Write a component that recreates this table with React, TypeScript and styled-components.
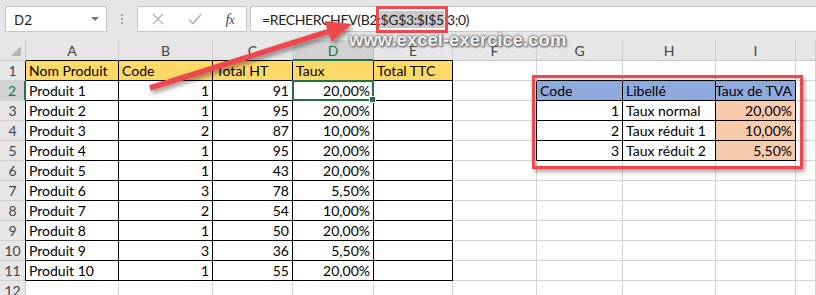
import React from 'react';
import styled, { createGlobalStyle } from 'styled-components';

const Global = createGlobalStyle`
  html, body { margin: 0; padding: 0; background: #fff; }
  body { width: 816px; height: 295px; overflow: hidden; font-family: Lato, "Noto Sans", sans-serif; }
`;

const RED = '#EE4750';
const GREEN = '#217346';
const GRID = '#D4D4D4';
const HEAD_BG = '#E6E6E6';

const Page = styled.div`
  position: relative;
  width: 816px;
  height: 295px;
  overflow: hidden;
  background: #fff;
`;

/* ---------- formula bar ---------- */
const Toolbar = styled.div`
  height: 40px;
  box-sizing: border-box;
  background: ${HEAD_BG};
  display: flex;
  align-items: flex-start;
  padding: 6px 0 0 5px;
`;

const Box = styled.div`
  height: 26px;
  box-sizing: border-box;
  background: #fff;
  border: 1px solid #C6C6C6;
  display: flex;
  align-items: center;
`;

const NameBox = styled(Box)`
  width: 102px;
  padding: 0 7px 0 8px;
  justify-content: space-between;
  font-family: "Noto Sans", sans-serif;
  font-size: 14px;
  color: #222;
`;

const Caret = styled.span`
  width: 0;
  height: 0;
  border-left: 4px solid transparent;
  border-right: 4px solid transparent;
  border-top: 4px solid #777;
  margin-top: -1px;
`;

const Dots = styled.div`
  width: 30px;
  height: 26px;
  display: flex;
  flex-direction: column;
  align-items: center;
  justify-content: center;
  gap: 2px;
  & > i { display: block; width: 2px; height: 2px; background: #A0A0A0; }
`;

const FuncBox = styled(Box)`
  width: 110px;
  padding: 0 12px 0 14px;
  justify-content: space-between;
`;

const Fx = styled.span`
  font-family: "Liberation Serif", serif;
  font-style: italic;
  font-size: 15px;
  color: #444;
  letter-spacing: -0.5px;
  & > small { font-size: 12px; }
`;

const FormulaBox = styled(Box)`
  flex: 1;
  margin-left: 3px;
  margin-right: -6px;
  padding-left: 11px;
  font-family: Lato, sans-serif;
  font-size: 14px;
  color: #222;
  letter-spacing: -0.35px;
  white-space: pre;
`;

const RefMark = styled.span`
  position: relative;
  background: #C9C9C9;
  &::after {
    content: "";
    position: absolute;
    left: -4px;
    right: -4px;
    top: -5px;
    bottom: -5px;
    border: 3px solid ${RED};
  }
`;

/* ---------- sheet ---------- */
const COLS = [93, 94, 80, 81, 79, 84, 86, 93, 80, 20];
const LETTERS = ['A', 'B', 'C', 'D', 'E', 'F', 'G', 'H', 'I', ''];

const Sheet = styled.div`
  display: grid;
  grid-template-columns: 26px ${COLS.map((c) => `${c}px`).join(' ')};
  grid-template-rows: 21px repeat(12, 20px);
`;

const Corner = styled.div`
  position: relative;
  background: ${HEAD_BG};
  border-right: 1px solid #C9C9C9;
  border-bottom: 1px solid #C9C9C9;
  box-sizing: border-box;
  &::after {
    content: "";
    position: absolute;
    right: 4px;
    bottom: 4px;
    width: 0;
    height: 0;
    border-left: 10px solid transparent;
    border-bottom: 10px solid #B5B5B5;
  }
`;

const ColHead = styled.div<{ $sel?: boolean; $bottom: string }>`
  box-sizing: border-box;
  background: ${(p) => (p.$sel ? '#D2D2D2' : HEAD_BG)};
  border-right: 1px solid ${(p) => (p.$sel ? '#BDBDBD' : '#D0D0D0')};
  border-bottom: ${(p) => (p.$sel ? `2px solid ${GREEN}` : `1px solid ${p.$bottom}`)};
  display: flex;
  align-items: center;
  justify-content: center;
  font-size: 14px;
  color: ${(p) => (p.$sel ? GREEN : '#444')};
  padding-top: 1px;
`;

const RowHead = styled.div<{ $sel?: boolean; $right: string }>`
  box-sizing: border-box;
  background: ${(p) => (p.$sel ? '#D2D2D2' : HEAD_BG)};
  border-right: ${(p) => (p.$sel ? `2px solid ${GREEN}` : `1px solid ${p.$right}`)};
  border-bottom: 1px solid #D0D0D0;
  display: flex;
  align-items: flex-end;
  justify-content: center;
  padding-bottom: 1px;
  font-size: 14px;
  color: ${(p) => (p.$sel ? GREEN : '#444')};
`;

const Cell = styled.div<{ $align: 'left' | 'right'; $fill?: string; $right: string; $bottom: string; $sel?: boolean }>`
  position: relative;
  box-sizing: border-box;
  background: ${(p) => p.$fill || '#fff'};
  border-right: 1px solid ${(p) => p.$right};
  border-bottom: 1px solid ${(p) => p.$bottom};
  display: flex;
  align-items: flex-end;
  justify-content: ${(p) => (p.$align === 'right' ? 'flex-end' : 'flex-start')};
  padding: 0 3px 1px 3px;
  font-size: 14px;
  color: #000;
  white-space: nowrap;
  overflow: visible;
  ${(p) =>
    p.$sel
      ? `
    &::before {
      content: "";
      position: absolute;
      left: -1px; top: -1px; right: -1px; bottom: -1px;
      border: 2px solid ${GREEN};
      z-index: 2;
    }
    &::after {
      content: "";
      position: absolute;
      right: -3px; bottom: -3px;
      width: 5px; height: 5px;
      background: ${GREEN};
      border: 1px solid #fff;
      z-index: 3;
    }`
      : ''}
`;

/* ---------- overlays ---------- */
const TableFrame = styled.div`
  position: absolute;
  left: 532px;
  top: 75px;
  width: 271px;
  height: 94px;
  box-sizing: border-box;
  border: 3px solid ${RED};
  box-shadow: 2px 3px 4px rgba(0, 0, 0, 0.35), inset 1px 1px 3px rgba(0, 0, 0, 0.25);
  pointer-events: none;
`;

const Watermark = styled.div`
  position: absolute;
  left: 349px;
  top: 29px;
  font-family: "Liberation Sans", Arial, sans-serif;
  font-weight: bold;
  font-size: 18.5px;
  color: rgba(255, 255, 255, 0.92);
  text-shadow: 0 0 2px #555, 1px 1px 2px #666, 0 0 3px #888;
  pointer-events: none;
  white-space: nowrap;
`;

const Overlay = styled.svg`
  position: absolute;
  left: 0;
  top: 0;
  pointer-events: none;
`;

type C = { t?: string | number; a?: 'left' | 'right'; fill?: string; boxed?: boolean };

const YELLOW = '#FFD966';
const BLUE = '#8EA9DB';
const PEACH = '#F8CBAD';

const products: [string, number, number, string][] = [
  ['Produit 1', 1, 91, '20,00%'],
  ['Produit 2', 1, 95, '20,00%'],
  ['Produit 3', 2, 87, '10,00%'],
  ['Produit 4', 1, 95, '20,00%'],
  ['Produit 5', 1, 43, '20,00%'],
  ['Produit 6', 3, 78, '5,50%'],
  ['Produit 7', 2, 54, '10,00%'],
  ['Produit 8', 1, 50, '20,00%'],
  ['Produit 9', 3, 36, '5,50%'],
  ['Produit 10', 1, 55, '20,00%'],
];

const rates: [number, string, string][] = [
  [1, 'Taux normal', '20,00%'],
  [2, 'Taux réduit 1', '10,00%'],
  [3, 'Taux réduit 2', '5,50%'],
];

function buildMatrix(): C[][] {
  const m: C[][] = Array.from({ length: 12 }, () => Array.from({ length: 10 }, () => ({} as C)));
  ['Nom Produit', 'Code', 'Total HT', 'Taux', 'Total TTC'].forEach((t, c) => {
    m[0][c] = { t, a: 'left', fill: YELLOW, boxed: true };
  });
  products.forEach((p, i) => {
    const r = i + 1;
    m[r][0] = { t: p[0], a: 'left', boxed: true };
    m[r][1] = { t: p[1], a: 'right', boxed: true };
    m[r][2] = { t: p[2], a: 'right', boxed: true };
    m[r][3] = { t: p[3], a: 'right', boxed: true };
    m[r][4] = { boxed: true };
  });
  ['Code', 'Libellé', 'Taux de TVA'].forEach((t, i) => {
    m[1][6 + i] = { t, a: 'left', fill: BLUE, boxed: true };
  });
  rates.forEach((r, i) => {
    const row = 2 + i;
    m[row][6] = { t: r[0], a: 'right', boxed: true };
    m[row][7] = { t: r[1], a: 'left', boxed: true };
    m[row][8] = { t: r[2], a: 'right', fill: PEACH, boxed: true };
  });
  m[1][8].a = 'right';
  return m;
}

const matrix = buildMatrix();
const isBoxed = (r: number, c: number) => !!(matrix[r] && matrix[r][c] && matrix[r][c].boxed);

/* arrow geometry */
const tail = { x: 150, y: 88 };
const tip = { x: 352, y: 24 };
function arrowPoints() {
  const dx = tip.x - tail.x;
  const dy = tip.y - tail.y;
  const len = Math.hypot(dx, dy);
  const ux = dx / len;
  const uy = dy / len;
  const nx = -uy;
  const ny = ux;
  const L = 25;
  const W = 11;
  const w = 2.8;
  const bx = tip.x - ux * L;
  const by = tip.y - uy * L;
  const pts = [
    [tail.x + nx * w, tail.y + ny * w],
    [bx + nx * w, by + ny * w],
    [bx + nx * W, by + ny * W],
    [tip.x, tip.y],
    [bx - nx * W, by - ny * W],
    [bx - nx * w, by - ny * w],
    [tail.x - nx * w, tail.y - ny * w],
  ];
  return pts.map((p) => `${p[0].toFixed(1)},${p[1].toFixed(1)}`).join(' ');
}

export default function App() {
  const selRow = 1;
  const selCol = 3;
  return (
    <Page>
      <Global />
      <Toolbar>
        <NameBox>
          <span>D2</span>
          <Caret />
        </NameBox>
        <Dots>
          <i />
          <i />
          <i />
        </Dots>
        <FuncBox>
          <svg width="12" height="12" viewBox="0 0 12 12">
            <path d="M1 1 L11 11 M11 1 L1 11" stroke="#B4B4B4" strokeWidth="1.3" fill="none" />
          </svg>
          <svg width="14" height="12" viewBox="0 0 14 12">
            <path d="M1 6.5 L5 10.5 L13 1.5" stroke="#B4B4B4" strokeWidth="1.6" fill="none" />
          </svg>
          <Fx>
            f<small>x</small>
          </Fx>
        </FuncBox>
        <FormulaBox>
          =RECHERCHEV(B2;<RefMark>$G$3:$I$5</RefMark>;3;0)
        </FormulaBox>
      </Toolbar>

      <Sheet>
        <Corner />
        {LETTERS.map((l, c) => (
          <ColHead key={`h${c}`} $sel={c === selCol} $bottom={isBoxed(0, c) ? '#000' : '#C9C9C9'}>
            {l}
          </ColHead>
        ))}
        {matrix.map((row, r) => (
          <React.Fragment key={`r${r}`}>
            <RowHead $sel={r === selRow} $right={isBoxed(r, 0) ? '#000' : '#C9C9C9'}>
              {r + 1}
            </RowHead>
            {row.map((cell, c) => {
              const right = cell.boxed || isBoxed(r, c + 1) ? '#000' : GRID;
              const bottom = cell.boxed || isBoxed(r + 1, c) ? '#000' : GRID;
              return (
                <Cell
                  key={`c${r}-${c}`}
                  $align={cell.a || 'left'}
                  $fill={cell.fill}
                  $right={right}
                  $bottom={bottom}
                  $sel={r === selRow && c === selCol}
                >
                  {cell.t}
                </Cell>
              );
            })}
          </React.Fragment>
        ))}
      </Sheet>

      <TableFrame />
      <Watermark>www.excel-exercice.com</Watermark>
      <Overlay width="816" height="295" viewBox="0 0 816 295">
        <defs>
          <filter id="arrowShadow" x="-20%" y="-50%" width="140%" height="200%">
            <feDropShadow dx="2" dy="3" stdDeviation="2" floodColor="#000" floodOpacity="0.4" />
          </filter>
        </defs>
        <polygon points={arrowPoints()} fill={RED} filter="url(#arrowShadow)" strokeLinejoin="round" />
      </Overlay>
    </Page>
  );
}
